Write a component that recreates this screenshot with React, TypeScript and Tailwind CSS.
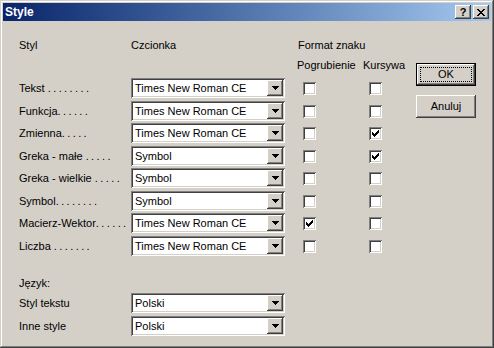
import React from "react";

const RAISED =
  "shadow-[inset_-1px_-1px_#404040,inset_1px_1px_#ffffff,inset_-2px_-2px_#808080,inset_2px_2px_#d4d0c8]";
const SUNKEN =
  "shadow-[inset_1px_1px_#808080,inset_-1px_-1px_#ffffff,inset_2px_2px_#404040,inset_-2px_-2px_#d4d0c8]";

type Row = {
  label: string;
  space: boolean;
  dots: number;
  font: string;
  bold: boolean;
  italic: boolean;
};

const rows: Row[] = [
  { label: "Tekst", space: true, dots: 8, font: "Times New Roman CE", bold: false, italic: false },
  { label: "Funkcja", space: false, dots: 6, font: "Times New Roman CE", bold: false, italic: false },
  { label: "Zmienna", space: false, dots: 5, font: "Times New Roman CE", bold: false, italic: true },
  { label: "Greka - małe", space: true, dots: 5, font: "Symbol", bold: false, italic: true },
  { label: "Greka - wielkie", space: true, dots: 5, font: "Symbol", bold: false, italic: false },
  { label: "Symbol", space: false, dots: 8, font: "Symbol", bold: false, italic: false },
  { label: "Macierz-Wektor", space: false, dots: 6, font: "Times New Roman CE", bold: true, italic: false },
  { label: "Liczba", space: true, dots: 7, font: "Times New Roman CE", bold: false, italic: false },
];

// row tops: 78, 101, 123, 146, 168, 191, 213, 236
const rowGaps = ["mt-[6px]", "mt-[3px]", "mt-[2px]", "mt-[3px]", "mt-[2px]", "mt-[3px]", "mt-[2px]", "mt-[3px]"];

function Arrow() {
  return (
    <svg width="7" height="4" viewBox="0 0 7 4" shapeRendering="crispEdges">
      <path d="M0 0h7v1h-7z M1 1h5v1h-5z M2 2h3v1h-3z M3 3h1v1h-1z" fill="#000" />
    </svg>
  );
}

function Combo({ value }: { value: string }) {
  return (
    <div className={`flex h-[20px] w-[154px] bg-white p-[2px] ${SUNKEN}`}>
      <div className="flex-1 truncate pl-[2px] leading-[16px] text-black">{value}</div>
      <div className={`flex h-[16px] w-[16px] items-center justify-center bg-[#d4d0c8] ${RAISED}`}>
        <Arrow />
      </div>
    </div>
  );
}

function Check({ on }: { on: boolean }) {
  return (
    <div className={`flex h-[13px] w-[13px] items-center justify-center bg-white ${SUNKEN}`}>
      {on && (
        <svg width="7" height="7" viewBox="0 0 7 7" shapeRendering="crispEdges">
          <path
            d="M6 0h1v1h-1z M5 1h2v1h-2z M0 2h1v1h-1z M4 2h3v1h-3z M0 3h2v1h-2z M3 3h3v1h-3z M0 4h5v1h-5z M1 5h3v1h-3z M2 6h1v1h-1z"
            fill="#000"
          />
        </svg>
      )}
    </div>
  );
}

function CaptionButton({ children }: { children: React.ReactNode }) {
  return (
    <div className={`flex h-[14px] w-[16px] items-center justify-center bg-[#d4d0c8] ${RAISED}`}>
      {children}
    </div>
  );
}

export default function App() {
  return (
    <div className="h-[348px] w-[494px] bg-[#d4d0c8] font-['Liberation_Sans',Arial,sans-serif] text-[11px] text-black">
      <div className="h-full w-full p-[3px] shadow-[inset_-1px_-1px_#404040,inset_1px_1px_#d4d0c8,inset_-2px_-2px_#808080,inset_2px_2px_#ffffff]">
        {/* Title bar */}
        <div className="flex h-[18px] items-center bg-linear-to-r from-[#0a246a] to-[#a6caf0] pl-[2px] pr-[2px]">
          <span className="flex-1 text-[12px] font-bold text-white">Style</span>
          <div className="flex gap-[2px]">
            <CaptionButton>
              <span className="mt-[1px] text-[11px] leading-none font-bold">?</span>
            </CaptionButton>
            <CaptionButton>
              <svg width="8" height="7" viewBox="0 0 8 7" shapeRendering="crispEdges">
                <path
                  d="M0 0h2v1h-2z M6 0h2v1h-2z M1 1h2v1h-2z M5 1h2v1h-2z M2 2h4v1h-4z M3 3h2v1h-2z M2 4h4v1h-4z M1 5h2v1h-2z M5 5h2v1h-2z M0 6h2v1h-2z M6 6h2v1h-2z"
                  fill="#000"
                />
              </svg>
            </CaptionButton>
          </div>
        </div>

        {/* Body */}
        <div className="flex pl-[16px]">
          <div className="w-[397px]">
            <div className="mt-[18px] flex h-[13px] leading-[13px]">
              <span className="w-[112px]">Styl</span>
              <span className="w-[167px]">Czcionka</span>
              <span>Format znaku</span>
            </div>
            <div className="mt-[7px] flex h-[13px] leading-[13px]">
              <span className="w-[278px]" />
              <span className="w-[66px]">Pogrubienie</span>
              <span>Kursywa</span>
            </div>

            {rows.map((r, i) => (
              <div key={r.label} className={`flex h-[20px] items-center ${rowGaps[i]}`}>
                <span className="w-[112px] whitespace-pre">
                  {r.label}
                  {r.space ? " " : ""}
                  <span className="tracking-[2.4px]">{".".repeat(r.dots)}</span>
                </span>
                <Combo value={r.font} />
                <div className="w-[18px]" />
                <Check on={r.bold} />
                <div className="w-[53px]" />
                <Check on={r.italic} />
              </div>
            ))}

            <div className="mt-[21px] h-[13px] leading-[13px]">Język:</div>
            <div className="mt-[3px] flex h-[20px] items-center">
              <span className="w-[112px]">Styl tekstu</span>
              <Combo value="Polski" />
            </div>
            <div className="mt-[3px] flex h-[20px] items-center">
              <span className="w-[112px]">Inne style</span>
              <Combo value="Polski" />
            </div>
          </div>

          <div className="w-[60px]">
            <div className="mt-[42px] h-[23px] border border-black">
              <div className={`flex h-full w-full items-center justify-center p-[3px] ${RAISED}`}>
                <div className="flex h-full w-full items-center justify-center border border-dotted border-black">
                  OK
                </div>
              </div>
            </div>
            <div className={`mt-[9px] flex h-[23px] items-center justify-center ${RAISED}`}>Anuluj</div>
          </div>
        </div>
      </div>
    </div>
  );
}
